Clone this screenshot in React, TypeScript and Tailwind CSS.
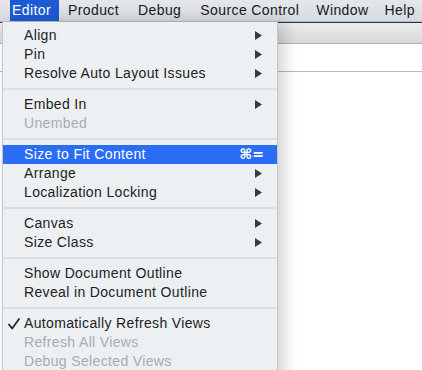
import React from "react";

type Item =
  | { kind: "sep" }
  | { kind: "item"; label: string; sub?: boolean; disabled?: boolean; active?: boolean; shortcut?: string; checked?: boolean };

const items: Item[] = [
  { kind: "item", label: "Align", sub: true },
  { kind: "item", label: "Pin", sub: true },
  { kind: "item", label: "Resolve Auto Layout Issues", sub: true },
  { kind: "sep" },
  { kind: "item", label: "Embed In", sub: true },
  { kind: "item", label: "Unembed", disabled: true },
  { kind: "sep" },
  { kind: "item", label: "Size to Fit Content", active: true, shortcut: "⌘=" },
  { kind: "item", label: "Arrange", sub: true },
  { kind: "item", label: "Localization Locking", sub: true },
  { kind: "sep" },
  { kind: "item", label: "Canvas", sub: true },
  { kind: "item", label: "Size Class", sub: true },
  { kind: "sep" },
  { kind: "item", label: "Show Document Outline" },
  { kind: "item", label: "Reveal in Document Outline" },
  { kind: "sep" },
  { kind: "item", label: "Automatically Refresh Views", checked: true },
  { kind: "item", label: "Refresh All Views", disabled: true },
  { kind: "item", label: "Debug Selected Views", disabled: true },
];

function Arrow() {
  return (
    <svg width="7" height="9" viewBox="0 0 7 9" className="shrink-0">
      <polygon points="0,0 7,4.5 0,9" fill="#3a3a3a" />
    </svg>
  );
}

function Check() {
  return (
    <svg width="12" height="12" viewBox="0 0 12 12" className="absolute left-[5px] top-[4px]">
      <path d="M1 6.5 L4.2 10.5 L11 1" fill="none" stroke="#222" strokeWidth="1.7" strokeLinecap="round" strokeLinejoin="round" />
    </svg>
  );
}

export default function App() {
  const font = { fontFamily: '"Liberation Sans", Arial, sans-serif' };
  return (
    <div className="relative w-[422px] h-[370px] overflow-hidden bg-white" style={font}>
      {/* Menubar */}
      <div className="flex h-[22px] items-stretch bg-gradient-to-b from-[#e4e8ec] to-[#d6dbe0] border-b border-[#b9bec4] text-[14px] tracking-[0.4px] text-[#1a1a1a]">
        <div className="ml-[10px] flex items-center bg-[#1d5ad3] pl-[2px] pr-[8px] text-white">Editor</div>
        <div className="ml-[9px] flex items-center">Product</div>
        <div className="ml-[19px] flex items-center">Debug</div>
        <div className="ml-[19px] flex items-center">Source Control</div>
        <div className="ml-[17px] flex items-center">Window</div>
        <div className="ml-[16px] flex items-center">Help</div>
      </div>

      {/* Window content behind */}
      <div className="flex flex-col">
        <div className="h-[1px] bg-[#2a3442]" />
        <div className="h-[21px] bg-gradient-to-b from-[#ececec] to-[#d8d8d8] border-b border-[#b0b0b0]" />
        <div className="h-[28px] bg-white border-b border-[#b8b8b8]" />
        <div className="flex-1 bg-white" />
      </div>

      {/* Dropdown menu */}
      <div className="absolute left-[2px] top-[22px] w-[276px] h-[360px] bg-[#edf0f2] border-l border-r border-[#c4c7ca] pt-[4px] shadow-[6px_0_14px_rgba(0,0,0,0.18)] text-[14px] tracking-[0.35px]">
        {items.map((it, i) =>
          it.kind === "sep" ? (
            <div key={i} className="flex h-[12px] items-center">
              <div className="h-[2px] w-full bg-[#dcdee0]" />
            </div>
          ) : (
            <div
              key={i}
              className={
                "relative flex h-[19px] items-center pl-[21px] pr-[15px] " +
                (it.active ? "bg-[#2a6cf4] text-white" : it.disabled ? "text-[#a9abad]" : "text-[#222222]")
              }
            >
              {it.checked && <Check />}
              <span className="flex-1">{it.label}</span>
              {it.sub && <Arrow />}
              {it.shortcut && (
                <span className="mr-[-2px] text-[14px] font-bold tracking-[0px]" style={{ fontFamily: '"DejaVu Sans", sans-serif' }}>
                  {it.shortcut}
                </span>
              )}
            </div>
          )
        )}
      </div>
    </div>
  );
}
